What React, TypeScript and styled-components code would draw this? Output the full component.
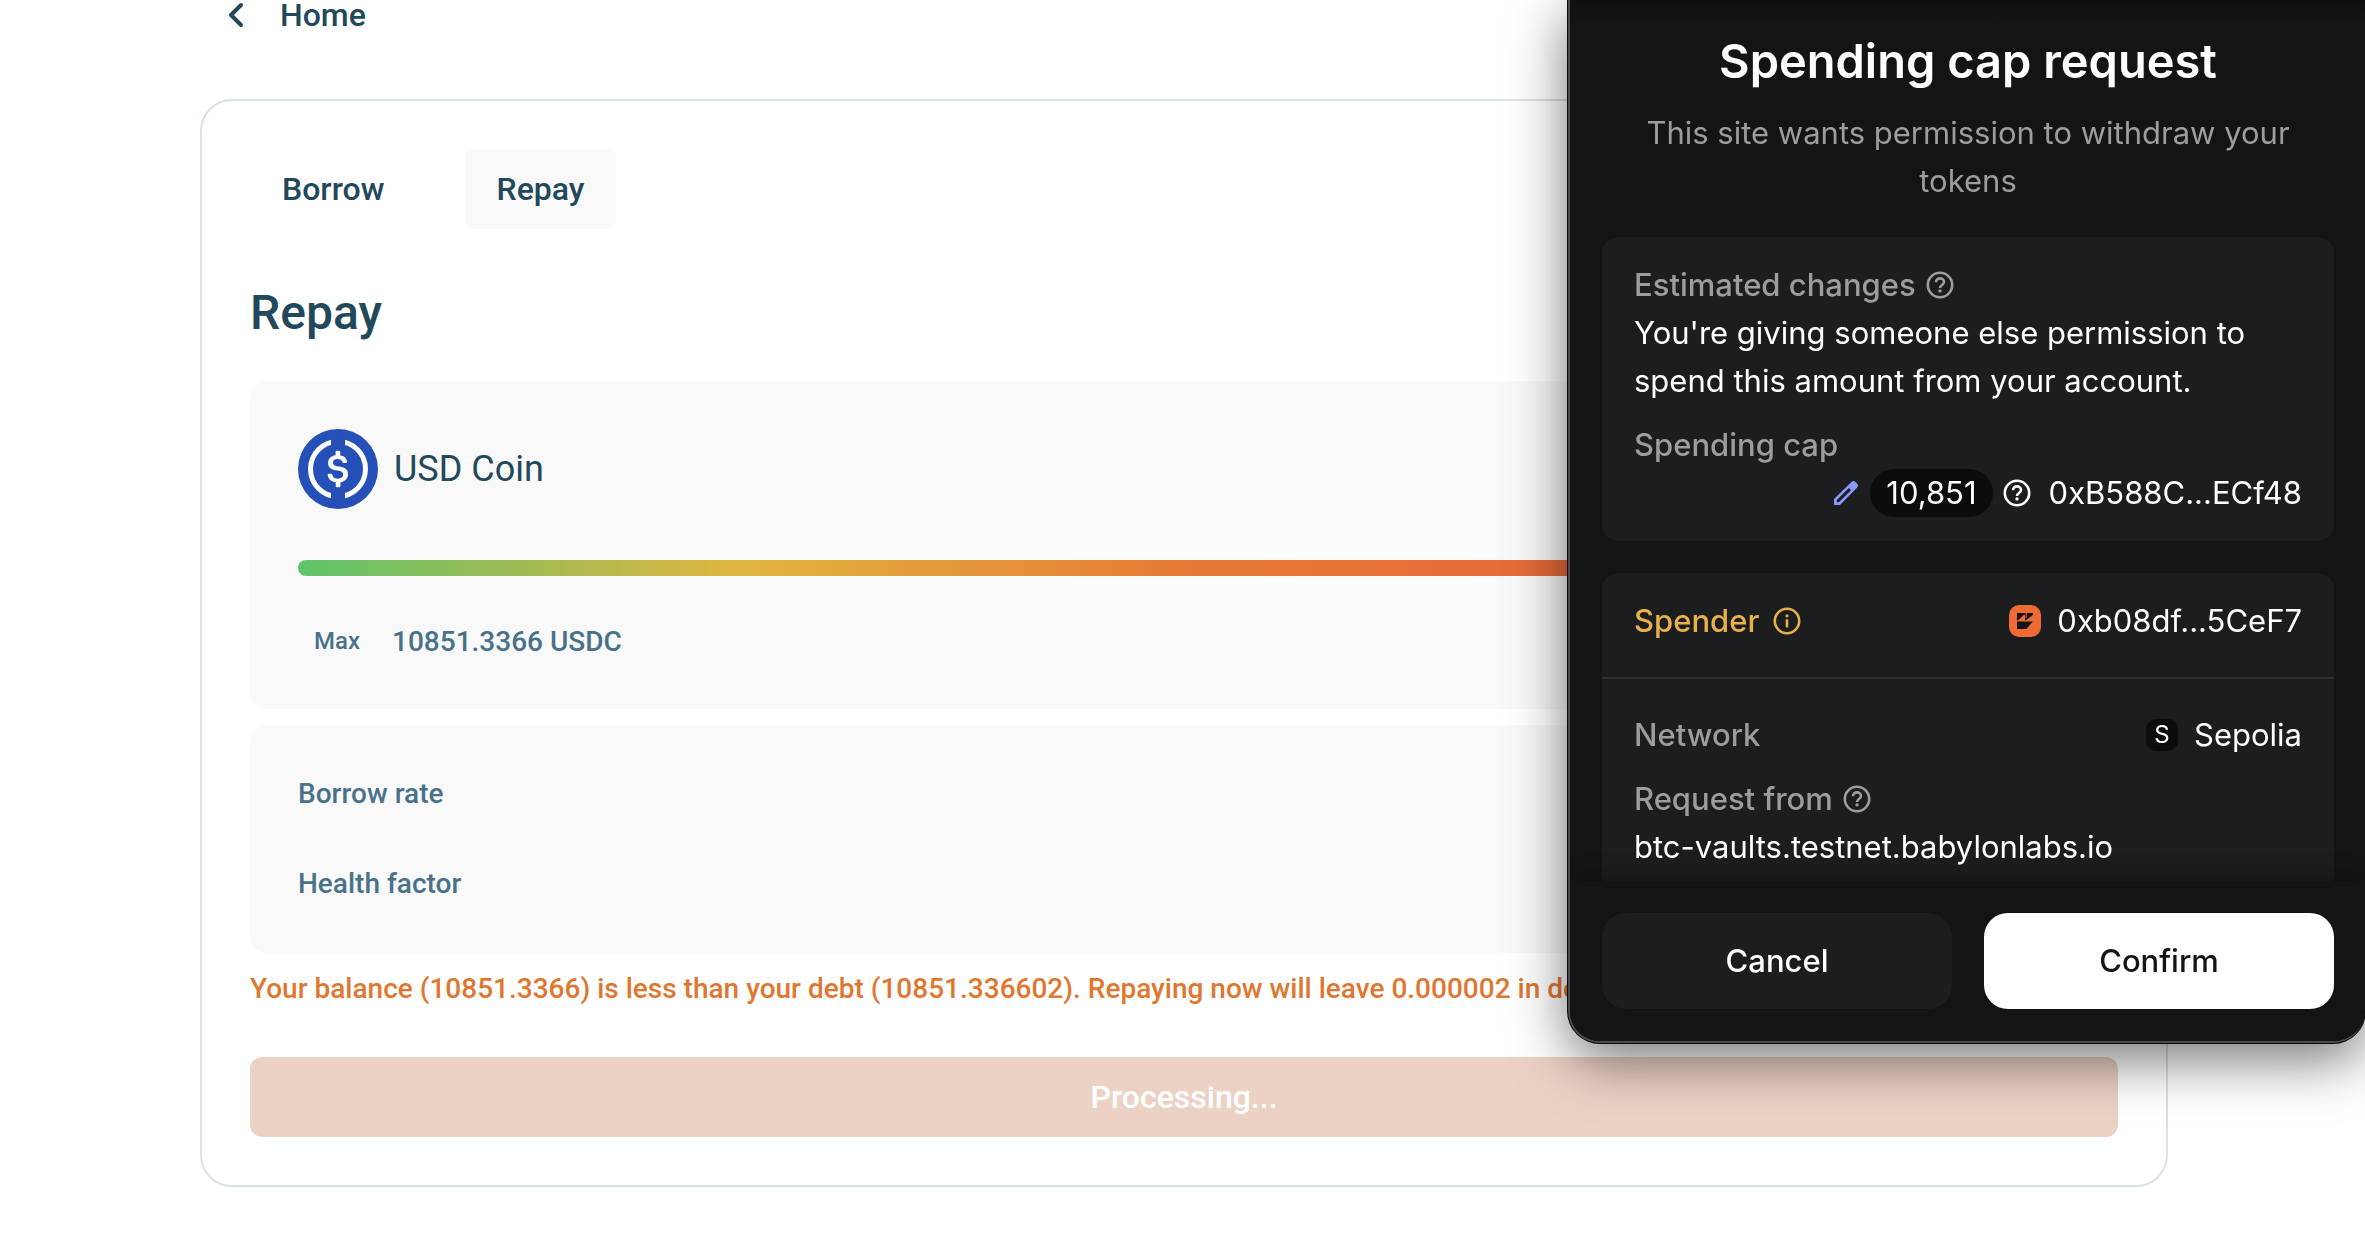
import React from "react";
import styled, { createGlobalStyle } from "styled-components";

const GlobalStyle = createGlobalStyle`
  *, *::before, *::after { box-sizing: border-box; }
  body { margin: 0; background: #ffffff; overflow-x: hidden; }
  h1, h2, p, ul { margin: 0; padding: 0; font: inherit; list-style: none; }
  button { border: 0; background: none; font: inherit; color: inherit; padding: 0; cursor: pointer; }
`;

const Page = styled.main`
  padding: 0 197px 48px 200px;
  font-family: Roboto, "Liberation Sans", sans-serif;
  color: #22485c;
`;

const TopBar = styled.nav`
  display: flex;
  height: 30px;
  padding-left: 20px;
  margin-bottom: 69px;
`;

const HomeLink = styled.a`
  display: flex;
  align-items: center;
  gap: 28px;
  color: inherit;
  text-decoration: none;
  font-size: 32px;
  font-weight: 500;
  line-height: 30px;
`;

const Card = styled.section`
  display: flex;
  flex-direction: column;
  padding: 48px;
  border: 2px solid #d9e0e6;
  border-radius: 32px;
`;

const Tabs = styled.div`
  display: flex;
  gap: 48px;
`;

const Tab = styled.button<{ $active?: boolean }>`
  height: 80px;
  padding: 0 32px;
  border-radius: 8px;
  background: ${(p) => (p.$active ? "#f9f9f9" : "transparent")};
  font-size: 32px;
  font-weight: 500;
`;

const Heading = styled.h1`
  margin: 48px 0 32px;
  font-size: 48px;
  font-weight: 500;
  line-height: 72px;
`;

const Panel = styled.div`
  padding: 48px;
  border-radius: 16px;
  background: #f9f9f9;

  & + & { margin-top: 16px; }
`;

const Asset = styled.div`
  display: flex;
  align-items: center;
  gap: 16px;
  font-size: 36px;
  line-height: 80px;
`;

const Slider = styled.input`
  display: block;
  appearance: none;
  width: 100%;
  height: 16px;
  margin: 51px 0 45px;
  border-radius: 8px;
  background: linear-gradient(to right, #5ec36a 0%, #e0b53f 25%, #e87a35 50%, #e0523e 100%);
  outline: none;

  &::-webkit-slider-thumb {
    appearance: none;
    width: 32px;
    height: 32px;
    border-radius: 50%;
    background: #ffffff;
    box-shadow: 0 2px 6px rgba(0, 0, 0, 0.3);
  }
`;

const Amount = styled.div`
  display: flex;
  align-items: center;
  gap: 16px;
  height: 40px;
  color: #48728a;
  font-size: 28px;
  font-weight: 500;
`;

const MaxButton = styled.button`
  padding: 0 16px;
  font-size: 24px;
`;

const Stats = styled.ul`
  display: flex;
  flex-direction: column;
  gap: 48px;
  color: #48728a;
  font-size: 28px;
  font-weight: 500;
  line-height: 42px;
`;

const Warning = styled.p`
  margin: 16px 0 48px;
  color: #e07730;
  font-size: 28px;
  font-weight: 500;
  line-height: 40px;
`;

const Submit = styled.button`
  height: 80px;
  border-radius: 12px;
  background: #ecd2c5;
  color: #ffffff;
  font-size: 32px;
  font-weight: 500;
`;

const Popup = styled.aside`
  position: fixed;
  top: 0;
  right: 0;
  width: 797px;
  display: flex;
  flex-direction: column;
  overflow: hidden;
  border: solid #4c4c4d;
  border-width: 0 0 2px 2px;
  border-radius: 0 0 32px 32px;
  background: #131416;
  box-shadow: 0 0 0 1px #0a0a0a, 0 16px 56px rgba(0, 0, 0, 0.55);
  color: #ffffff;
  font-family: Inter, "Liberation Sans", sans-serif;
  font-size: 31px;
  line-height: 48px;
`;

const PopupBody = styled.div`
  max-height: 881px;
  overflow: hidden;
  padding: 29px 31px 0 32px;
  background: linear-gradient(to bottom, #0e0f10, #131416 26px);
`;

const PopupTitle = styled.h2`
  margin-bottom: 16px;
  font-size: 47px;
  font-weight: 600;
  line-height: 64px;
  text-align: center;
`;

const Subtitle = styled.p`
  color: #9d9d9e;
  text-align: center;
`;

const Group = styled.section`
  margin-top: 32px;
  border-radius: 16px;
  background: #1c1d1f;
`;

const Block = styled.div<{ $pad: string }>`
  display: flex;
  flex-direction: column;
  gap: 16px;
  padding: ${(p) => p.$pad};

  & + & { border-top: 2px solid #2d2e30; }
`;

const Line = styled.div`
  display: flex;
  align-items: center;
  justify-content: space-between;
`;

const Label = styled.div<{ $tone?: string; $gap?: number }>`
  display: flex;
  align-items: center;
  gap: ${(p) => p.$gap ?? 8}px;
  color: ${(p) => p.$tone ?? "#9d9d9e"};
  font-weight: 500;
`;

const Value = styled.div`
  display: flex;
  align-items: center;
  gap: 16px;
`;

const CapRow = styled.div`
  display: flex;
  align-items: center;
  justify-content: flex-end;
  gap: 8px;
`;

const IconButton = styled.button`
  display: flex;
`;

const Pill = styled.span`
  padding: 0 16px;
  border-radius: 24px;
  background: #0b0c0e;
`;

const NetworkBadge = styled.span`
  display: grid;
  place-items: center;
  width: 32px;
  height: 32px;
  border-radius: 10px;
  background: #0b0c0e;
  font-size: 24px;
  line-height: 32px;
`;

const Footer = styled.footer`
  position: relative;
  display: grid;
  grid-template-columns: 1fr 1fr;
  gap: 32px;
  padding: 32px 31px 32px 32px;
  background: #131416;
  box-shadow: 0 0 24px rgba(0, 0, 0, 0.35);
`;

const Action = styled.button<{ $primary?: boolean }>`
  height: 96px;
  border-radius: 24px;
  background: ${(p) => (p.$primary ? "#ffffff" : "#1c1d1f")};
  color: ${(p) => (p.$primary ? "#131416" : "#ffffff")};
  font-weight: 500;
`;

const Chevron = () => (
  <svg width="32" height="30" viewBox="0 0 32 30" fill="none" stroke="currentColor" strokeWidth="4" strokeLinecap="round" strokeLinejoin="round" aria-hidden="true">
    <path d="M21 5 11 15l10 10" />
  </svg>
);

const UsdcLogo = () => (
  <svg width="80" height="80" viewBox="0 0 80 80" aria-hidden="true">
    <circle cx="40" cy="40" r="40" fill="#2450b8" />
    <circle cx="40" cy="40" r="27.5" fill="none" stroke="#fff" strokeWidth="5" />
    <path d="M33 8h14v64H33z" fill="#2450b8" />
    <path
      transform="scale(2.5)"
      fill="#fff"
      d="M20.022 18.124c0-2.124-1.28-2.852-3.84-3.156-1.828-.243-2.193-.728-2.193-1.578 0-.85.61-1.396 1.828-1.396 1.097 0 1.707.364 2.011 1.275a.458.458 0 00.427.303h.975a.416.416 0 00.427-.425v-.06a3.04 3.04 0 00-2.743-2.489V9.142c0-.243-.183-.425-.487-.486h-.915c-.243 0-.426.182-.487.486v1.396c-1.829.242-2.986 1.456-2.986 2.974 0 2.002 1.218 2.791 3.778 3.095 1.707.303 2.255.668 2.255 1.639 0 .97-.853 1.638-2.011 1.638-1.585 0-2.133-.667-2.316-1.578-.06-.242-.244-.364-.427-.364h-1.036a.416.416 0 00-.426.425v.06c.243 1.518 1.219 2.61 3.23 2.914v1.457c0 .242.183.425.487.485h.915c.243 0 .426-.182.487-.485V21.34c1.829-.303 3.047-1.578 3.047-3.217z"
    />
  </svg>
);

const QuestionIcon = () => (
  <svg width="32" height="32" viewBox="0 0 32 32" fill="none" stroke="currentColor" strokeWidth="2.6" aria-hidden="true">
    <circle cx="16" cy="16" r="12.2" />
    <path d="M12 13.2c0-2.2 1.7-3.8 4-3.8s4 1.5 4 3.6c0 2.9-4 3.1-4 6" />
    <circle cx="16" cy="21.9" r="1.7" fill="currentColor" stroke="none" />
  </svg>
);

const InfoIcon = () => (
  <svg width="32" height="32" viewBox="0 0 32 32" fill="none" stroke="currentColor" strokeWidth="2.6" aria-hidden="true">
    <circle cx="16" cy="16" r="12.2" />
    <path d="M16 14.4v8" />
    <circle cx="16" cy="10.8" r="1.6" fill="currentColor" stroke="none" />
  </svg>
);

const PencilIcon = () => (
  <svg width="32" height="32" viewBox="0 0 32 32" aria-hidden="true">
    <path
      fill="#8b99ff"
      fillRule="evenodd"
      d="M4 28v-6L21.6 4.8c1.2-1.1 2.6-1.1 3.7 0l1.9 1.9c1.1 1.2 1.1 2.6 0 3.8L10 28zM6.8 25.2h2L21 13.2 18.9 11 6.8 23z"
    />
  </svg>
);

const SpenderLogo = () => (
  <svg width="32" height="32" viewBox="0 0 32 32" aria-hidden="true">
    <rect width="32" height="32" rx="10" fill="#ef6a35" />
    <path fill="#131416" d="M8 8h16v2L17 15.2h-1V9.8L9.8 15.2H8zM8 16.4h15.8L17.4 24H8z" />
    <path fill="#ef6a35" d="M15.2 9.4v5.8H9.4zM16.6 8h1v4.4l-1 1z" />
  </svg>
);

export default function App() {
  return (
    <>
      <GlobalStyle />
      <Page>
        <TopBar>
          <HomeLink href="#home">
            <Chevron />
            Home
          </HomeLink>
        </TopBar>
        <Card>
          <Tabs role="tablist">
            <Tab role="tab" aria-selected={false}>Borrow</Tab>
            <Tab role="tab" aria-selected $active>Repay</Tab>
          </Tabs>
          <Heading>Repay</Heading>
          <Panel>
            <Asset>
              <UsdcLogo />
              USD Coin
            </Asset>
            <Slider type="range" min={0} max={100} defaultValue={100} aria-label="Repay amount" />
            <Amount>
              <MaxButton>Max</MaxButton>
              <span>10851.3366 USDC</span>
            </Amount>
          </Panel>
          <Panel>
            <Stats>
              <li>Borrow rate</li>
              <li>Health factor</li>
            </Stats>
          </Panel>
          <Warning>
            Your balance (10851.3366) is less than your debt (10851.336602). Repaying now will leave 0.000002 in debt.
          </Warning>
          <Submit type="button">Processing...</Submit>
        </Card>
      </Page>

      <Popup aria-label="Spending cap request">
        <PopupBody>
          <PopupTitle>Spending cap request</PopupTitle>
          <Subtitle>This site wants permission to withdraw your tokens</Subtitle>
          <Group>
            <Block $pad="24px 32px">
              <div>
                <Label>
                  Estimated changes
                  <QuestionIcon />
                </Label>
                <p>You're giving someone else permission to spend this amount from your account.</p>
              </div>
              <div>
                <Label>Spending cap</Label>
                <CapRow>
                  <IconButton aria-label="Edit spending cap">
                    <PencilIcon />
                  </IconButton>
                  <Pill>10,851</Pill>
                  <Value>
                    <QuestionIcon />
                    0xB588C...ECf48
                  </Value>
                </CapRow>
              </div>
            </Block>
          </Group>
          <Group>
            <Block $pad="24px 32px 32px">
              <Line>
                <Label $tone="#e8b04a" $gap={12}>
                  Spender
                  <InfoIcon />
                </Label>
                <Value>
                  <SpenderLogo />
                  0xb08df...5CeF7
                </Value>
              </Line>
            </Block>
            <Block $pad="32px 32px 24px">
              <Line>
                <Label>Network</Label>
                <Value>
                  <NetworkBadge>S</NetworkBadge>
                  Sepolia
                </Value>
              </Line>
              <div>
                <Label>
                  Request from
                  <QuestionIcon />
                </Label>
                <p>btc-vaults.testnet.babylonlabs.io</p>
              </div>
            </Block>
          </Group>
        </PopupBody>
        <Footer>
          <Action>Cancel</Action>
          <Action $primary>Confirm</Action>
        </Footer>
      </Popup>
    </>
  );
}
